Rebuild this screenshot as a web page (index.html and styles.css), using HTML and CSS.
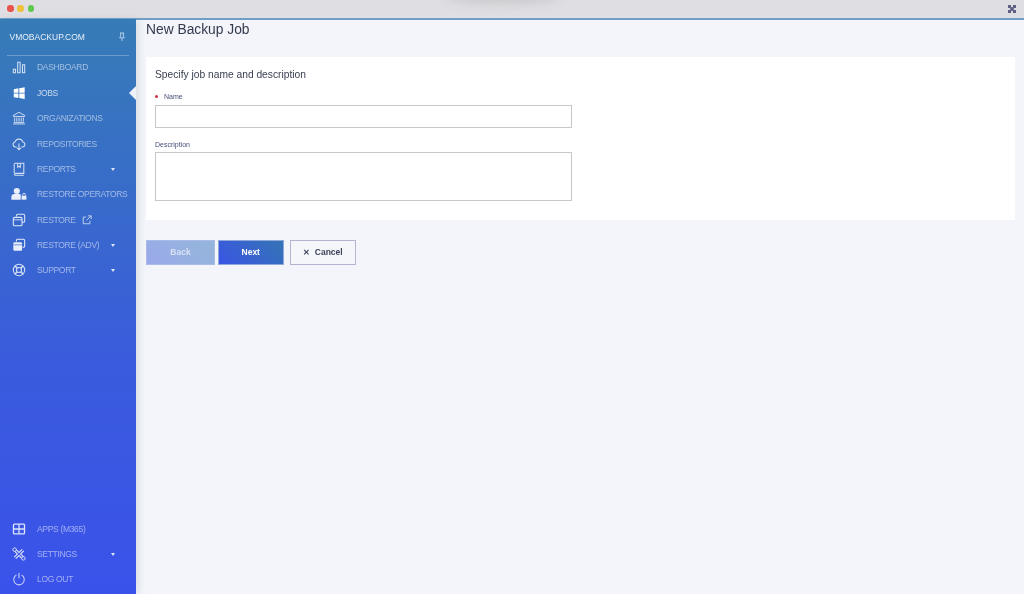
FILE: index.html
```html
<!DOCTYPE html>
<html lang="en">
<head>
<meta charset="utf-8">
<title>New Backup Job</title>
<link rel="stylesheet" href="styles.css">
</head>
<body>
<div class="app">
  <header class="chrome">
    <div class="lights"><i class="light red"></i><i class="light yellow"></i><i class="light green"></i></div>
    <div class="notch"></div>
    <svg class="fs" viewBox="0 0 8 8" width="8" height="8"><path d="M0 0h3v3H0zM5 0h3v3H5zM0 5h3v3H0zM5 5h3v3H5z" fill="#5f5f85"/><path d="M2 2 6 6M6 2 2 6" stroke="#5f5f85" stroke-width="1.800"/></svg>
  </header>
  <div class="body">
    <aside class="side">
      <div class="brand"><span>VMOBACKUP.COM</span>
        <svg class="pin" viewBox="0 0 10 12" width="8" height="10"><path d="M2.500 1h5M3.300 1v4L2 7h6L6.700 5V1M5 7v4" fill="none" stroke="#cfe0f2" stroke-width="1"/></svg>
      </div>
      <nav class="menu top">
        <a class="item"><svg viewBox="0 0 16 16" class="ic"><path d="M1.500 10.500h2.500v4h-2.500zM6.500 2.500h2.800v12h-2.800zM12 5.500h2.500v9H12z" fill="none" stroke="#d2dff2" stroke-width="1.200"/></svg><span>DASHBOARD</span></a>
        <a class="item active"><svg viewBox="0 0 16 16" class="ic"><path d="M2 3.600 7.300 2.700v5H2zM8.300 2.500 14.500 1.500v6.200H8.300zM2 8.700h5.300v5L2 12.800zM8.300 8.700h6.200v6.100l-6.200-1z" fill="#fff"/></svg><span>JOBS</span></a>
        <a class="item"><svg viewBox="0 0 16 16" class="ic"><path d="M8 1.500 14.500 5v1.200h-13V5zM3 7.500v4.500M5.500 7.500v4.500M8 7.500v4.500M10.500 7.500v4.500M13 7.500v4.500M2 13h12M1.200 14.800h13.600" fill="none" stroke="#d2dff2" stroke-width="1.100"/></svg><span>ORGANIZATIONS</span></a>
        <a class="item"><svg viewBox="0 0 16 16" class="ic"><path d="M5.500 11.500H4A3 3 0 0 1 3.500 5.600 4.700 4.700 0 0 1 12.400 5.600 3 3 0 0 1 12 11.500h-1.500M8 7.500v7M5.800 12.300 8 14.500l2.200-2.200" fill="none" stroke="#d2dff2" stroke-width="1.200"/></svg><span>REPOSITORIES</span></a>
        <a class="item"><svg viewBox="0 0 16 16" class="ic"><path d="M2.500 12.500V2.500A1 1 0 0 1 3.500 1.500h10v11.500H3.500a1.200 1.200 0 0 0 0 2.200h10M6.500 2v4l1.500-1 1.500 1V2" fill="none" stroke="#d2dff2" stroke-width="1.200"/></svg><span>REPORTS</span><i class="caret"></i></a>
        <a class="item"><svg viewBox="0 0 18 16" class="ic wide"><circle cx="6.500" cy="4.500" r="3.500" fill="#e8eefa"/><path d="M.3 14.500v-3A3.500 3.500 0 0 1 3.800 8h5.500a3.500 3.500 0 0 1 1.700.5v6z" fill="#e8eefa"/><path d="M12 10h5.500v4.500H12z" fill="#e8eefa"/><path d="M13.200 10V8.700a1.500 1.500 0 0 1 3 0V10" fill="none" stroke="#e8eefa"/></svg><span>RESTORE OPERATORS</span></a>
        <a class="item"><svg viewBox="0 0 16 16" class="ic"><path d="M5 4V3a1.500 1.500 0 0 1 1.500-1.500h6.500A1.500 1.500 0 0 1 14.500 3v6A1.500 1.500 0 0 1 13 10.500h-1.500" fill="none" stroke="#dde7f6" stroke-width="1.200"/><rect x="1.500" y="5" width="10" height="9.500" rx="1.500" fill="none" stroke="#dde7f6" stroke-width="1.200"/><path d="M1.500 7.800h10" stroke="#dde7f6"/></svg><span>RESTORE</span><svg viewBox="0 0 12 12" class="ext"><path d="M9.500 7v3.500h-8v-8H5M7 1h4v4M11 1 5.500 6.500" fill="none" stroke="#c6d6ee" stroke-width="1.100"/></svg></a>
        <a class="item"><svg viewBox="0 0 16 16" class="ic"><path d="M5 4V3a1.500 1.500 0 0 1 1.500-1.500h6.500A1.500 1.500 0 0 1 14.500 3v6A1.500 1.500 0 0 1 13 10.500h-1" fill="none" stroke="#e8eefa" stroke-width="1.200"/><rect x="1.500" y="4.800" width="10" height="9.700" rx="1.500" fill="#e8eefa"/><path d="M1.500 7.800h10" stroke="#5b8ad0"/></svg><span>RESTORE (ADV)</span><i class="caret"></i></a>
        <a class="item"><svg viewBox="0 0 16 16" class="ic"><circle cx="8" cy="8" r="6.500" fill="none" stroke="#d2dff2" stroke-width="1.200"/><circle cx="8" cy="8" r="2.900" fill="none" stroke="#d2dff2" stroke-width="1.200"/><path d="M3.500 3.500 6 6M12.500 3.500 10 6M3.500 12.500 6 10M12.500 12.500 10 10" stroke="#d2dff2" stroke-width="1.800"/></svg><span>SUPPORT</span><i class="caret"></i></a>
      </nav>
      <nav class="menu bottom">
        <a class="item"><svg viewBox="0 0 16 16" class="ic"><rect x="1.700" y="2.500" width="12.600" height="11" rx="1" fill="none" stroke="#dbe4fa" stroke-width="1.500"/><path d="M1.700 8h12.600M8 2.500v11" stroke="#dbe4fa" stroke-width="1.500"/></svg><span>APPS (M365)</span></a>
        <a class="item"><svg viewBox="0 0 16 16" class="ic"><path d="M3.500 3.500 12.500 12.500M12.500 3.500 3.500 12.500" stroke="#e2e8fc" stroke-width="3.800"/><path d="M3.500 3.500 12.500 12.500M12.500 3.500 3.500 12.500" stroke="#3a55e4" stroke-width="1.400"/><circle cx="3" cy="3" r="2" fill="#3a55e4" stroke="#e2e8fc"/><circle cx="13" cy="13" r="2" fill="#3a55e4" stroke="#e2e8fc"/></svg><span>SETTINGS</span><i class="caret"></i></a>
        <a class="item"><svg viewBox="0 0 16 16" class="ic"><path d="M5 3.500a6 6 0 1 0 6 0M8 1v6" fill="none" stroke="#cdd6f8" stroke-width="1.200"/></svg><span>LOG OUT</span></a>
      </nav>
    </aside>
    <main class="main">
      <h1 class="title">New Backup Job</h1>
      <section class="card">
        <h2 class="heading">Specify job name and description</h2>
        <div class="field">
          <label class="label req">Name</label>
          <input class="input" type="text">
        </div>
        <div class="field">
          <label class="label">Description</label>
          <textarea class="input area"></textarea>
        </div>
      </section>
      <div class="actions">
        <button class="btn back">Back</button>
        <button class="btn next">Next</button>
        <button class="btn cancel"><span class="x">✕</span>Cancel</button>
      </div>
    </main>
  </div>
</div>
</body>
</html>
```
FILE: styles.css
```css
* { box-sizing: border-box; }
html, body { margin: 0; height: 100%; overflow: hidden; }
body { font-family: "Liberation Sans", Arial, sans-serif; background: #f3f5fa; }
.app { width: 1024px; height: 594px; display: flex; flex-direction: column; filter: blur(0.35px); }

.chrome { height: 18px; flex: none; background: #dfdee2; display: flex; align-items: center; padding: 0 8px 0 7px; position: relative; overflow: hidden; }
.lights { display: flex; gap: 3.800px; margin-top: -1px; }
.light { width: 6.500px; height: 6.500px; border-radius: 50%; display: block; }
.red { background: #e8534c; }
.yellow { background: #ecc13b; }
.green { background: #5dc94e; }
.notch { position: absolute; left: 445px; top: -14px; width: 115px; height: 16px; border-radius: 50%; background: #c4c3c7; filter: blur(6px); }
.fs { margin-left: auto; margin-top: -1px; }

.body { flex: 1; display: flex; min-height: 0; border-top: 2px solid #6f9fc8; }
.side { width: 136px; flex: none; margin-top: -1px; background: linear-gradient(180deg, #367cb6 0%, #3a5bdd 60%, #3a52ea 100%); display: flex; flex-direction: column; color: #fff; box-shadow: 3px 0 6px rgba(120,130,160,.18); position: relative; z-index: 1; }
.brand { height: 37px; margin: 0 7px; padding: 0 3px 0 2.500px; display: flex; align-items: center; justify-content: space-between; border-bottom: 1px solid rgba(255,255,255,.28); font-size: 8.500px; color: #e6eef8; }
.menu { display: flex; flex-direction: column; }
.top { margin-top: -1.350px; }
.item { height: 25.400px; display: flex; align-items: center; padding-left: 12px; font-size: 8.500px; letter-spacing: -0.320px; color: rgba(255,255,255,.52); position: relative; white-space: nowrap; }
.ic { width: 14px; height: 14px; flex: none; margin-right: 11px; }
.ic.wide { width: 16px; margin-left: -1px; margin-right: 10px; }
.active { color: rgba(255,255,255,.72); }
.active::after { content: ""; position: absolute; right: 0; top: 50%; margin-top: -7px; border: 7px solid transparent; border-left-width: 0; border-right: 7px solid #eef1f7; }
.caret { position: absolute; left: 111px; top: 50%; margin-top: -1px; border: 2.500px solid transparent; border-top: 3px solid #dfe6f6; border-bottom-width: 0; }
.ext { width: 10px; height: 10px; margin-left: 6.500px; }
.bottom { margin-top: auto; padding-bottom: 3px; }
.bottom .item { height: 25px; }

.main { flex: 1; min-width: 0; padding: 0 9px 0 10px; }
.title { margin: 0; height: 37px; padding-top: 1px; font-size: 13.800px; line-height: 18px; font-weight: 400; color: #333a4d; }
.card { background: #fff; height: 163px; padding: 11px 9px 0; }
.heading { margin: 0 0 11px; font-size: 10.250px; line-height: 13px; font-weight: 400; color: #3a4052; }
.field { display: flex; flex-direction: column; }
.field + .field { margin-top: 11.500px; }
.field + .field .label { margin-bottom: 3.500px; }
.label { font-size: 7px; line-height: 9px; color: #474f78; margin-bottom: 4px; }
.req { padding-left: 9px; position: relative; }
.req::before { content: ""; position: absolute; left: 0; top: 3px; width: 3px; height: 3px; border-radius: 50%; background: #d0323e; }
.input { width: 417px; height: 23px; border: 1px solid #c6c7cb; background: #fff; display: block; padding: 0; margin: 0; resize: none; outline: 0; border-radius: 0; }
.area { height: 49px; }

.actions { display: flex; margin-top: 20px; }
.btn { height: 24.500px; width: 69px; border: 1px solid transparent; font-family: inherit; font-size: 8.500px; font-weight: 700; padding: 0; color: #fff; border-radius: 0; }
.back { background: linear-gradient(45deg, #9aa9ea, #94b6da); border-color: #a9bce9; color: #d9e2f4; }
.next { width: 66.500px; margin-left: 2.500px; background: linear-gradient(45deg, #3a55e4, #3574b4); border-color: #8ea8dc; }
.cancel { width: 66.500px; margin-left: 5.500px; background: #f5f6fa; border-color: #b3b5d0; color: #3c4258; }
.x { margin-right: 5px; font-size: 8px; }
```
